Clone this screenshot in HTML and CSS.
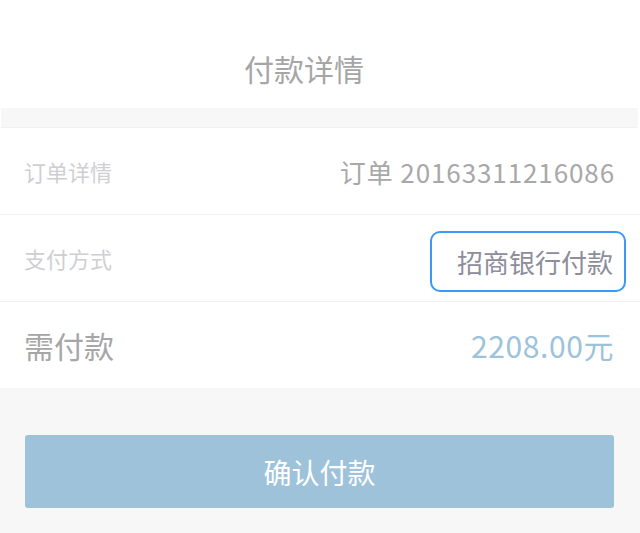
FILE: index.html
```html
<!DOCTYPE html>
<html lang="zh-CN">
<head>
<meta charset="utf-8">
<title>付款详情</title>
<link rel="stylesheet" href="styles.css">
</head>
<body>
<div class="page">
  <header class="header"><h1 class="title">付款详情</h1></header>
  <div class="gap"></div>
  <section class="list">
    <div class="row">
      <span class="label">订单详情</span>
      <span class="value">订单 20163311216086</span>
    </div>
    <div class="row">
      <span class="label">支付方式</span>
      <span class="method">招商银行付款</span>
    </div>
    <div class="row total">
      <span class="total-label">需付款</span>
      <span class="amount">2208.00元</span>
    </div>
  </section>
  <div class="footer">
    <button class="confirm">确认付款</button>
  </div>
</div>
</body>
</html>
```
FILE: styles.css
```css
* { box-sizing: border-box; }
html, body { margin: 0; padding: 0; background: #ffffff; }
body {
  font-family: "Noto Sans CJK SC", "Noto Sans", sans-serif;
  width: 640px;
  height: 533px;
  overflow: hidden;
}
.page { display: flex; flex-direction: column; height: 533px; }
.header {
  height: 108px;
  display: flex;
  align-items: center;
  justify-content: center;
  padding: 0 32px 0 0;
}
.title {
  margin: 0;
  font-size: 30px;
  font-weight: 400;
  color: #a6a6a6;
  line-height: 1;
  padding-top: 28px;
}
.gap {
  height: 20px;
  background: #f7f7f7;
  margin: 0 2px 0 1px;
  border-bottom: 1px solid #f0f0f0;
}
.list { display: flex; flex-direction: column; }
.row {
  height: 87px;
  display: flex;
  align-items: center;
  justify-content: space-between;
  padding: 0 26px 0 24px;
  border-bottom: 1px solid #efefef;
}
.row.total { border-bottom: none; height: 86px; padding-right: 27px; }
.label { font-size: 22px; color: #cfcfd3; }
.value { font-size: 26px; color: #a8a8a8; letter-spacing: 0.9px; margin-right: -1px; }
.method {
  font-size: 26px;
  color: #8d8d9b;
  border: 2px solid #3a99f5;
  border-radius: 10px;
  height: 61px;
  width: 196px;
  display: flex;
  align-items: center;
  justify-content: flex-end;
  padding-right: 11px;
  margin-right: -12px;
  margin-top: 6px;
}
.total-label { font-size: 30px; color: #a6a6a6; }
.amount { font-size: 30px; color: #9dc3dc; letter-spacing: 0.6px; margin-right: -1px; }
.footer {
  flex: 1;
  background: #f7f7f7;
  padding: 47px 26px 0 25px;
}
.confirm {
  display: block;
  width: 100%;
  height: 73px;
  border: none;
  border-radius: 3px;
  background: #9dc2da;
  color: #ffffff;
  font-family: inherit;
  font-size: 28px;
  cursor: pointer;
}
```
